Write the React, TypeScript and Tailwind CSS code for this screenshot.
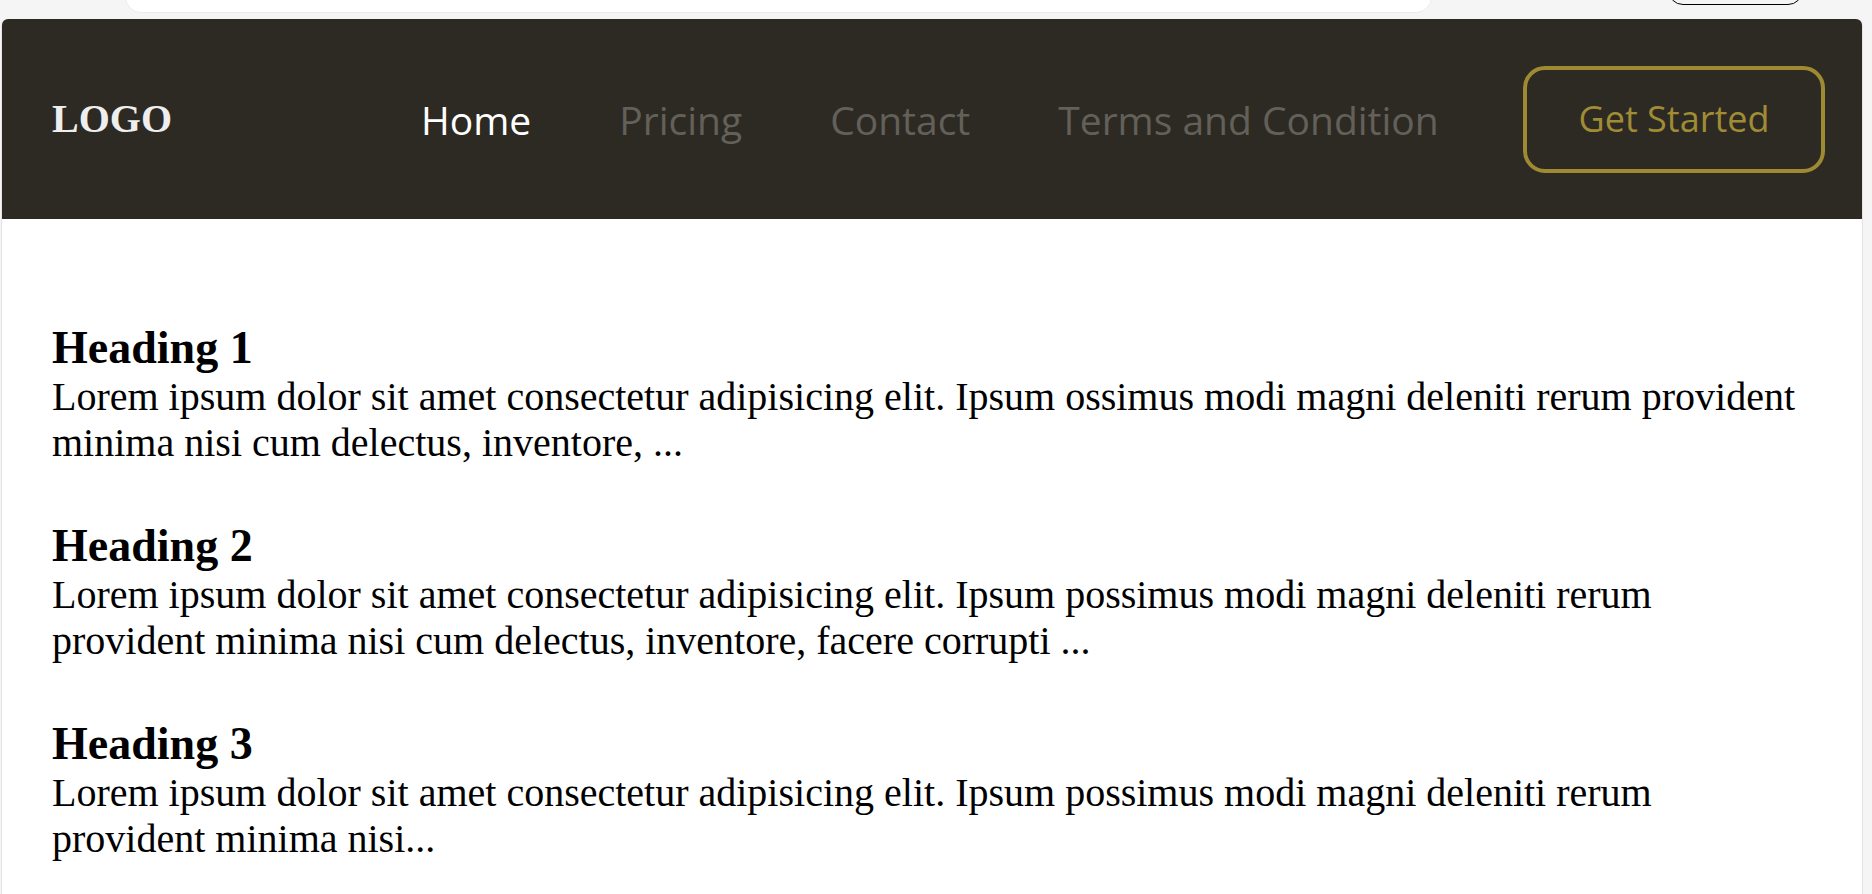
import React from "react";

const navItems = [
  { label: "Home", active: true },
  { label: "Pricing", active: false },
  { label: "Contact", active: false },
  { label: "Terms and Condition", active: false },
];

const sections = [
  {
    title: "Heading 1",
    body: "Lorem ipsum dolor sit amet consectetur adipisicing elit. Ipsum ossimus modi magni deleniti rerum provident minima nisi cum delectus, inventore, ...",
  },
  {
    title: "Heading 2",
    body: "Lorem ipsum dolor sit amet consectetur adipisicing elit. Ipsum possimus modi magni deleniti rerum provident minima nisi cum delectus, inventore, facere corrupti ...",
  },
  {
    title: "Heading 3",
    body: "Lorem ipsum dolor sit amet consectetur adipisicing elit. Ipsum possimus modi magni deleniti rerum provident minima nisi...",
  },
];

export default function App() {
  return (
    <div className="min-h-screen w-[1872px] overflow-hidden bg-[#f5f5f5]">
      {/* top strip of the surrounding page */}
      <div className="flex h-[19px] items-start">
        <div className="-mt-[27px] ml-[125px] h-[40px] w-[1307px] rounded-[16px] border border-[#ebebeb] bg-white" />
        <div className="-mt-[25px] ml-[236px] h-[30px] w-[135px] rounded-full border border-black" />
      </div>

      {/* preview card */}
      <div className="ml-[1px] min-h-[875px] w-[1862px] rounded-t-[7px] border-x border-[#e3e3e3] bg-white">
        <header className="flex h-[200px] items-center rounded-t-[6px] bg-[#2d2a23] pl-[50px] pr-[37px]">
          <div className="font-['Liberation_Serif',serif] text-[40px] font-bold leading-none text-[#eeeeee]">
            LOGO
          </div>
          <nav className="ml-[249px] flex items-center gap-[88px] font-['Comic_Sans_MS','Open_Sans',sans-serif] text-[39px] leading-none">
            {navItems.map((item) => (
              <a
                key={item.label}
                className={item.active ? "text-white" : "text-[#63605a]"}
              >
                {item.label}
              </a>
            ))}
          </nav>
          <button className="ml-auto flex h-[107px] w-[302px] items-center justify-center rounded-[22px] border-[4px] border-[#9e8a33] font-['Comic_Sans_MS','Open_Sans',sans-serif] text-[36px] leading-none text-[#a08c35]">
            Get Started
          </button>
        </header>

        <main className="flex flex-col gap-[53px] px-[50px] pt-[102px] font-['Liberation_Serif',serif] text-black">
          {sections.map((s) => (
            <section key={s.title}>
              <h2 className="text-[46px] font-bold leading-[53px]">{s.title}</h2>
              <p className="text-[40px] leading-[46px]">{s.body}</p>
            </section>
          ))}
        </main>
      </div>
    </div>
  );
}
